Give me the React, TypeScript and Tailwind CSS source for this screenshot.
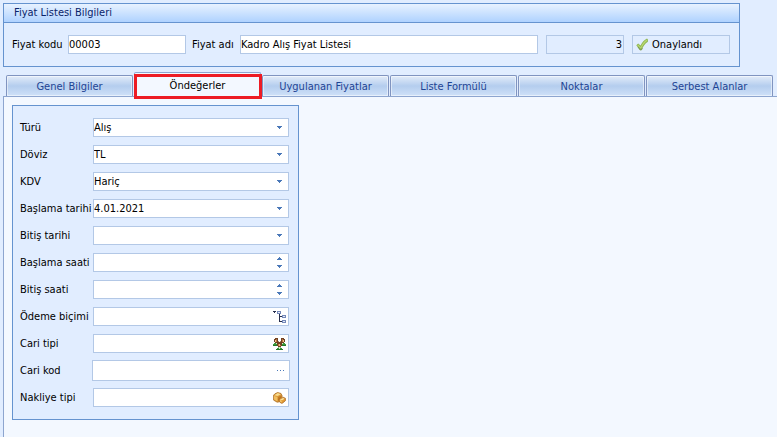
import { useState } from 'react';
import type { ReactNode } from 'react';

const TABS = ['Genel Bilgiler', 'Öndeğerler', 'Uygulanan Fiyatlar', 'Liste Formülü', 'Noktalar', 'Serbest Alanlar'];

const boxClass = 'flex h-[19px] border border-[#b3c8e6] bg-white';
const inputClass = 'h-full min-w-0 flex-1 bg-transparent outline-none';

function ArrowDown() {
    return (
        <svg width="5" height="3" viewBox="0 0 5 3" shapeRendering="crispEdges" fill="#4a78b8">
            <path d="M0 0h5v1H0zM1 1h3v1H1zM2 2h1v1H2z" />
        </svg>
    );
}

function ArrowUp() {
    return (
        <svg width="5" height="3" viewBox="0 0 5 3" shapeRendering="crispEdges" fill="#4a78b8">
            <path d="M2 0h1v1H2zM1 1h3v1H1zM0 2h5v1H0z" />
        </svg>
    );
}

function CheckMark() {
    return (
        <svg width="12" height="13" viewBox="0 0 12 13">
            <path d="M.3 7.200 2.200 5.400 4.600 7.600C6 4.600 8.400 1.800 11 .6L11.900 1.400V3.800C9 5.600 7 8.600 5.600 12L4 12.300Z" fill="#8fb652" />
            <path d="M1.200 7.200 2.300 6.400 4.700 9.200C6.200 5.800 8.400 3 11 1.600V3C8.600 4.800 6.600 7.400 5 10.800Z" fill="#b9d873" />
            <path d="M2 9 4.300 12 5.600 11.800 6.400 10" fill="none" stroke="#76924f" strokeWidth=".8" />
        </svg>
    );
}

function TreeIcon() {
    return (
        <svg width="13" height="12" viewBox="0 0 13 12" shapeRendering="crispEdges">
            <path d="M0 0h3v1H0zM1 1h1v1H1zM6 3h1v8H6zM7 5h2v1H7zM7 10h2v1H7z" fill="#252d4c" />
            <path d="M4 0h4v3H4zM9 4h4v3H9zM9 9h4v3H9z" fill="#7387b8" />
            <path d="M5 1h2v1H5zM10 5h2v1h-2zM10 10h2v1h-2z" fill="#e6ecf8" />
        </svg>
    );
}

function PeopleIcon() {
    return (
        <svg width="13" height="12" viewBox="0 0 13 12" shapeRendering="crispEdges">
            <path d="M0 6h4v2H0zM9 6h4v2H9zM1 5h2v1H1zM10 5h2v1h-2zM3 11h7v1H3zM4 10h5v1H4z" fill="#3a9a3a" />
            <path d="M0 7h4v1H0zM9 7h4v1H9zM3 11h7v1H3z" fill="#237a2a" />
            <path d="M2 0h3v1H2zM8 0h3v1H8zM1 1h4v3H1zM8 1h4v3H8zM2 4h3v1H2zM8 4h3v1H8zM5 4h3v1H5zM4 5h5v3H4zM5 8h3v1H5z" fill="#714122" />
            <path d="M5 3h1v1H5zM7 3h1v1H7z" fill="#a9815f" />
            <path d="M2 2h1v2H2zM10 2h1v2h-1zM6 6h1v2H6z" fill="#f0c08a" />
            <path d="M3 1h1v3H3zM9 1h1v3H9zM5 6h1v2H5zM7 7h1v1H7z" fill="#b9773f" />
            <path d="M3 5h1v1H3zM9 5h1v1H9zM6 9h1v2H6z" fill="#d5ecc4" />
            <path d="M5 9h1v1H5zM7 9h1v1H7z" fill="#8fc389" />
        </svg>
    );
}

function BoxesIcon() {
    return (
        <svg width="13" height="12" viewBox="0 0 14 13">
            <path d="M.6 3.500 2 2 5 .6l3.600 1 1.200 2.400V8L6 10.800 4.400 11 .6 8.800z" fill="#dc9a3a" stroke="#a8691b" strokeWidth=".8" />
            <path d="M1.400 3.600 5.200 1.200l3.200 1.200-3.400 2z" fill="#f8dc8e" />
            <path d="M1 4.400 4.600 5.400v4.600L1.200 8.200z" fill="#f0bf60" />
            <path d="M5.400 5.300 9.200 3.400V7L5.400 9.800z" fill="#c27b24" />
            <path d="M6.500 7.600 8 6.600l1.400.6L11 5.800l2.400 1v2.600L10.400 12 9 12.200 6.800 10.600z" fill="#e39b34" stroke="#a4601a" strokeWidth=".8" />
            <path d="M7.400 7.800 11 6.600l1.400.8-2.600 1.600z" fill="#fae3a0" />
            <path d="M7.400 8.400 9.400 9.400v2L7.400 10.200z" fill="#f4c96f" />
        </svg>
    );
}

function DotsIcon() {
    return (
        <svg width="7" height="1" viewBox="0 0 7 1" shapeRendering="crispEdges" fill="#4a78b8">
            <path d="M0 0h1v1H0zM3 0h1v1H3zM6 0h1v1H6z" />
        </svg>
    );
}

function Row({ id, label, children }: { id: string; label: string; children: ReactNode }) {
    return (
        <div className="flex h-[21px] items-center">
            <label htmlFor={id} className="w-[72px] shrink-0 whitespace-nowrap">{label}</label>
            {children}
        </div>
    );
}

function SelectRow({ id, label, options }: { id: string; label: string; options: string[] }) {
    return (
        <Row id={id} label={label}>
            <div className={`${boxClass} relative mx-px flex-1`}>
                <select id={id} className="h-full w-full appearance-none bg-transparent outline-none">
                    {options.map((o) => <option key={o}>{o}</option>)}
                </select>
                <span className="pointer-events-none absolute inset-y-0 right-0 flex w-[17px] items-center justify-center">
                    <ArrowDown />
                </span>
            </div>
        </Row>
    );
}

type ButtonRowProps = { id: string; label: string; value?: string; icon: ReactNode; action: string; large?: boolean };

function ButtonRow({ id, label, value = '', icon, action, large = false }: ButtonRowProps) {
    return (
        <Row id={id} label={label}>
            <div className={large ? 'flex h-[21px] flex-1 border border-[#b3c8e6] bg-white' : `${boxClass} mx-px flex-1`}>
                <input id={id} type="text" defaultValue={value} className={inputClass} />
                <button type="button" aria-label={action} className="flex w-[17px] items-center justify-center">{icon}</button>
            </div>
        </Row>
    );
}

function TimeRow({ id, label }: { id: string; label: string }) {
    return (
        <Row id={id} label={label}>
            <div className={`${boxClass} mx-px flex-1`}>
                <input id={id} type="text" className={inputClass} />
                <div className="flex w-[17px] flex-col items-center justify-center gap-[5px]">
                    <button type="button" aria-label="Artır"><ArrowUp /></button>
                    <button type="button" aria-label="Azalt"><ArrowDown /></button>
                </div>
            </div>
        </Row>
    );
}

export default function App() {
    const [active, setActive] = useState('Öndeğerler');

    return (
        <div className="flex min-h-screen flex-col bg-[#e1edff] pt-[3px] pl-[3px] font-['Tahoma','DejaVu_Sans_Condensed',sans-serif] text-[11px] leading-[14px] text-black [&_svg]:block">
            <section className="mr-[37px] max-w-[737px] border border-[#6593cf]">
                <h1 className="flex h-[19px] items-center border-b border-[#6593cf] bg-linear-to-b from-[#e8f2ff] to-[#afd2ff] px-[10px] text-[#0a246a]">
                    Fiyat Listesi Bilgileri
                </h1>
                <div className="flex items-center px-2 py-3">
                    <label htmlFor="kod" className="w-14 shrink-0 whitespace-nowrap">Fiyat kodu</label>
                    <div className={`${boxClass} w-[118px]`}>
                        <input id="kod" type="text" defaultValue="00003" className={inputClass} />
                    </div>
                    <label htmlFor="ad" className="ml-[6px] w-12 shrink-0 whitespace-nowrap">Fiyat adı</label>
                    <div className={`${boxClass} flex-1`}>
                        <input id="ad" type="text" defaultValue="Kadro Alış Fiyat Listesi" className={inputClass} />
                    </div>
                    <output className="ml-2 flex h-[19px] w-[78px] items-center justify-end border border-[#b3c8e6] px-px">3</output>
                    <div className="mr-px ml-2 flex h-[19px] w-[98px] items-center gap-1 border border-[#b3c8e6] px-[3px]">
                        <CheckMark />
                        <span>Onaylandı</span>
                    </div>
                </div>
            </section>

            <div role="tablist" className="mt-[5px] mr-1 flex h-6 max-w-[770px] items-end gap-px pl-[3px]">
                {TABS.map((tab) => (
                    <button
                        key={tab}
                        type="button"
                        role="tab"
                        aria-selected={tab === active}
                        onClick={() => setActive(tab)}
                        className={
                            tab === active
                                ? 'relative h-6 flex-1 rounded-t-[2px] border-x border-t border-[#8da5cf] bg-[#f3f8ff] pt-[2px]'
                                : 'h-[21px] flex-1 rounded-t-[2px] border-x border-t border-[#8094c0] bg-linear-to-b from-[#e3ecf9] from-0% via-[#b4cdee] via-50% to-[#cfe1f8] pt-[2px] text-[#1e4494] inset-ring inset-ring-white/50'
                        }
                    >
                        {tab}
                        {tab === active && <span className="absolute top-px -right-[2px] -bottom-[3px] -left-px border-3 border-[#ed1c24]" />}
                    </button>
                ))}
            </div>

            <main className="flex-1 border-t border-l border-[#8da5cf] bg-[#f3f8ff] p-2">
                <section className="flex max-w-[287px] flex-col gap-[6px] border border-[#6593cf] bg-[#e1edff] py-[11px] pr-2 pl-[7px]">
                    <SelectRow id="turu" label="Türü" options={['Alış', 'Satış']} />
                    <SelectRow id="doviz" label="Döviz" options={['TL', 'USD', 'EUR']} />
                    <SelectRow id="kdv" label="KDV" options={['Hariç', 'Dahil']} />
                    <ButtonRow id="baslamaTarihi" label="Başlama tarihi" value="4.01.2021" icon={<ArrowDown />} action="Tarih seç" />
                    <ButtonRow id="bitisTarihi" label="Bitiş tarihi" icon={<ArrowDown />} action="Tarih seç" />
                    <TimeRow id="baslamaSaati" label="Başlama saati" />
                    <TimeRow id="bitisSaati" label="Bitiş saati" />
                    <ButtonRow id="odeme" label="Ödeme biçimi" icon={<TreeIcon />} action="Ödeme biçimi seç" />
                    <ButtonRow id="cariTipi" label="Cari tipi" icon={<PeopleIcon />} action="Cari tipi seç" />
                    <ButtonRow id="cariKod" label="Cari kod" icon={<DotsIcon />} action="Cari kod seç" large />
                    <ButtonRow id="nakliye" label="Nakliye tipi" icon={<BoxesIcon />} action="Nakliye tipi seç" />
                </section>
            </main>
        </div>
    );
}
